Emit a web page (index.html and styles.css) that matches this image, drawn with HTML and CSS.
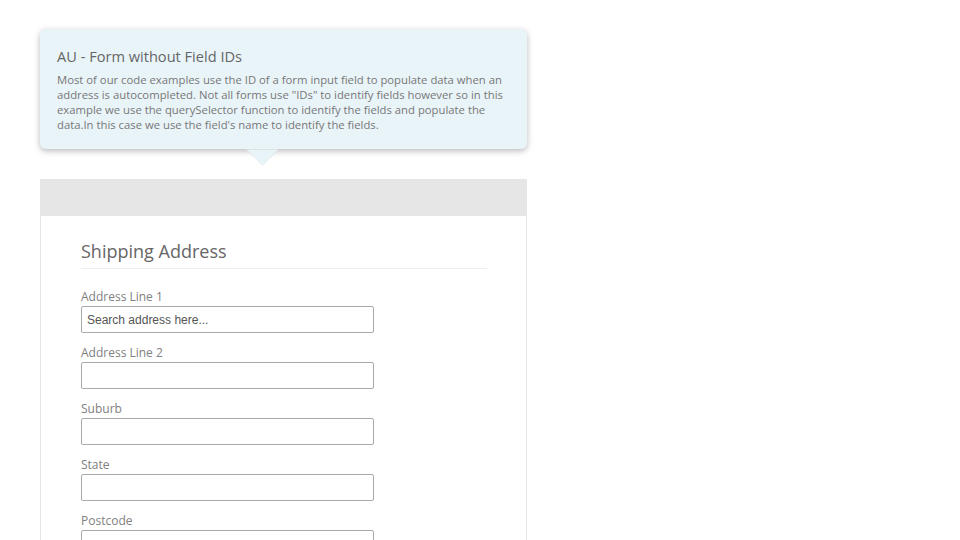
FILE: index.html
```html
<!DOCTYPE html>
<html lang="en">
<head>
<meta charset="utf-8">
<title>AU - Form without Field IDs</title>
<link rel="stylesheet" href="styles.css">
</head>
<body>
<div class="page">
  <div class="tip">
    <h1 class="tip-title">AU - Form without Field IDs</h1>
    <p class="tip-text">Most of our code examples use the ID of a form input field to populate data when an address is autocompleted. Not all forms use "IDs" to identify fields however so in this example we use the querySelector function to identify the fields and populate the data.In this case we use the field's name to identify the fields.</p>
  </div>
  <div class="panel">
    <div class="panel-bar"></div>
    <form class="panel-body">
      <h2 class="form-title">Shipping Address</h2>
      <div class="field">
        <label class="field-label">Address Line 1</label>
        <input class="field-input" type="text" name="address1" placeholder="Search address here...">
      </div>
      <div class="field">
        <label class="field-label">Address Line 2</label>
        <input class="field-input" type="text" name="address2">
      </div>
      <div class="field">
        <label class="field-label">Suburb</label>
        <input class="field-input" type="text" name="suburb">
      </div>
      <div class="field">
        <label class="field-label">State</label>
        <input class="field-input" type="text" name="state">
      </div>
      <div class="field">
        <label class="field-label">Postcode</label>
        <input class="field-input" type="text" name="postcode">
      </div>
    </form>
  </div>
</div>
</body>
</html>
```
FILE: styles.css
```css
html, body {
  margin: 0;
  padding: 0;
  background: #ffffff;
  font-family: "Open Sans", "Noto Sans", sans-serif;
}

.page {
  width: 487px;
  padding: 29px 0 0 40px;
}

.tip {
  position: relative;
  background: #e9f4f9;
  border-radius: 6px;
  box-shadow: 0 2px 6px rgba(0, 0, 0, 0.28);
  padding: 17px 17px 16px 17px;
  height: 87px;
}

.tip::after {
  content: "";
  position: absolute;
  left: 211px;
  bottom: -12px;
  width: 23px;
  height: 23px;
  background: #e9f4f9;
  transform: rotate(45deg);
  box-shadow: 3px 3px 4px rgba(0, 0, 0, 0.18);
  clip-path: polygon(100% 0, 100% 100%, 0 100%);
}

.tip-title {
  margin: 0;
  font-size: 14.6px;
  line-height: 20px;
  font-weight: 400;
  color: #666666;
}

.tip-text {
  margin: 6px 0 0 0;
  font-size: 11.3px;
  line-height: 15px;
  color: #777777;
}

.panel {
  margin-top: 30px;
  border: 1px solid #e4e4e4;
  border-top: none;
  background: #ffffff;
  height: 400px;
}

.panel-bar {
  height: 37px;
  background: #e6e6e6;
  margin: 0 -1px;
}

.panel-body {
  padding: 21px 39px 0 40px;
}

.form-title {
  margin: 0 0 19px 0;
  font-size: 18px;
  line-height: 28px;
  font-weight: 400;
  color: #666666;
  padding-bottom: 3px;
  border-bottom: 1px solid #eeeeee;
}

.field {
  margin-bottom: 11px;
}

.field-label {
  display: block;
  font-size: 12px;
  line-height: 18px;
  color: #808080;
}

.field-input {
  display: block;
  box-sizing: border-box;
  width: 293px;
  height: 27px;
  margin: 0;
  padding: 0 5px;
  border: 1px solid #a9a9a9;
  border-radius: 2px;
  background: #ffffff;
  font-family: "Liberation Sans", Arial, sans-serif;
  font-size: 12px;
  color: #333333;
}

.field-input::placeholder {
  color: #555555;
  opacity: 1;
}
```
